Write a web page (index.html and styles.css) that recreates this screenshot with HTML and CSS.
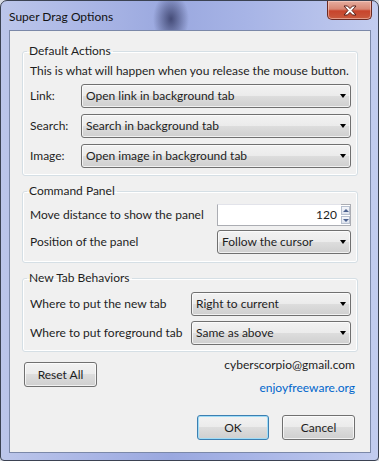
FILE: index.html
```html
<!DOCTYPE html>
<html lang="en">
<head>
    <meta charset="UTF-8">
    <title>Super Drag Options</title>
    <link rel="stylesheet" href="styles.css">
</head>
<body>

<div class="window">
    <div class="titlebar">
        <span class="title">Super Drag Options</span>
        <span class="close-btn">
            <svg width="16" height="11" viewBox="0 0 16 11">
                <path d="M2 1 L5.5 1 L8 3.6 L10.5 1 L14 1 L10 5.5 L14 10 L10.5 10 L8 7.4 L5.5 10 L2 10 L6 5.5 Z" fill="#fff" stroke="#5a1f18" stroke-width="1" stroke-linejoin="round"/>
            </svg>
        </span>
    </div>

    <div class="client">
        <!-- Acciones por defecto -->
        <fieldset class="group group-actions">
            <legend>Default Actions</legend>
            <p class="hint">This is what will happen when you release the mouse button.</p>
            <div class="rows rows-actions">
                <span class="lbl">Link:</span>
                <div class="combo">Open link in background tab<span class="arrow"></span></div>
                <span class="lbl">Search:</span>
                <div class="combo">Search in background tab<span class="arrow"></span></div>
                <span class="lbl">Image:</span>
                <div class="combo">Open image in background tab<span class="arrow"></span></div>
            </div>
        </fieldset>

        <fieldset class="group">
            <legend>Command Panel</legend>
            <div class="rows rows-panel">
                <span class="lbl">Move distance to show the panel</span>
                <div class="spin">
                    <div class="spin-field">120</div>
                    <div class="spin-btns">
                        <span class="spin-up"></span>
                        <span class="spin-down"></span>
                    </div>
                </div>
                <span class="lbl">Position of the panel</span>
                <div class="combo">Follow the cursor<span class="arrow"></span></div>
            </div>
        </fieldset>

        <fieldset class="group">
            <legend>New Tab Behaviors</legend>
            <div class="rows rows-tabs">
                <span class="lbl">Where to put the new tab</span>
                <div class="combo">Right to current<span class="arrow"></span></div>
                <span class="lbl">Where to put foreground tab</span>
                <div class="combo">Same as above<span class="arrow"></span></div>
            </div>
        </fieldset>

        <div class="footer">
            <div class="footer-top">
                <button class="btn btn-reset">Reset All</button>
                <div class="contact">
                    <div class="mail">cyberscorpio@gmail.com</div>
                    <a class="site" href="#">enjoyfreeware.org</a>
                </div>
            </div>
            <div class="actions">
                <button class="btn btn-default">OK</button>
                <button class="btn">Cancel</button>
            </div>
        </div>
    </div>
</div>

</body>
</html>
```

FILE: styles.css
```css
html, body {
    margin: 0;
    padding: 0;
    background: #d8dce4;
}

body {
    font-family: Lato, "Noto Sans", sans-serif;
    font-size: 12px;
    color: #1e1e1e;
}

/* Marco de la ventana (estilo Aero) */
.window {
    width: 379px;
    height: 461px;
    box-sizing: border-box;
    padding: 0 7px 8px 8px;
    border: 1px solid #3b4252;
    border-radius: 7px 7px 4px 4px;
    background:
        radial-gradient(ellipse 18px 26px at 170px 18px, rgba(40, 45, 85, 0.75), rgba(40, 45, 85, 0) 100%),
        linear-gradient(90deg, #bcc6ea 0%, #a9b5e5 25%, #9aa8df 45%, #a7b4e6 65%, #c2ccef 100%);
}

.titlebar {
    height: 29px;
    display: flex;
    justify-content: space-between;
    align-items: flex-start;
}
.title {
    margin: 8px 0 0 0;
    line-height: 16px;
    color: #111;
}
.close-btn {
    width: 45px;
    height: 19px;
    margin-right: -1px;
    display: flex;
    align-items: center;
    justify-content: center;
    box-sizing: border-box;
    border: 1px solid #6b2a22;
    border-top: none;
    border-radius: 0 0 5px 5px;
    background: linear-gradient(#e6ad9f 0%, #d88774 45%, #c8442c 55%, #c95a3e 100%);
    box-shadow: inset 0 0 0 1px rgba(255, 220, 210, 0.5);
}

.client {
    height: 423px;
    box-sizing: border-box;
    background: #f0f0f0;
    border: 1px solid #7b88a8;
    padding: 12px 12px 12px 12px;
    display: flex;
    flex-direction: column;
}

/* Grupos */
.group {
    margin: 0 0 7px 0;
    padding: 0 6px 6px 7px;
    border: 1px solid #d5dfe5;
    border-radius: 3px;
    box-shadow: inset 0 0 0 1px #fff;
    min-width: 0;
}
.group-actions { padding-bottom: 7px; }
.group legend {
    padding: 0 2px;
    margin-left: -3px;
    line-height: 16px;
}

.hint {
    margin: 4px 0 5px 0;
    line-height: 16px;
    white-space: nowrap;
}

.rows {
    display: grid;
    align-items: center;
    row-gap: 6px;
}
.rows-actions { grid-template-columns: 51px 1fr; }
.rows-panel {
    grid-template-columns: 187px 1fr;
    row-gap: 4px;
    margin: 5px 0 2px 0;
}
.rows-tabs {
    grid-template-columns: 161px 1fr;
    row-gap: 5px;
    margin: 6px 0 0 0;
}

.lbl { line-height: 16px; white-space: nowrap; }

/* Combo desplegable estilo Windows 7 */
.combo {
    position: relative;
    height: 24px;
    box-sizing: border-box;
    line-height: 22px;
    padding-left: 4px;
    border: 1px solid #707070;
    border-radius: 3px;
    background: linear-gradient(#f2f2f2 0%, #ebebeb 50%, #dddddd 50%, #cfcfcf 100%);
    box-shadow: inset 0 0 0 1px rgba(255, 255, 255, 0.7);
    white-space: nowrap;
}
.arrow {
    position: absolute;
    right: 4px;
    top: 9px;
    width: 0;
    height: 0;
    border-left: 3.5px solid transparent;
    border-right: 3.5px solid transparent;
    border-top: 4px solid #000;
}

/* Campo numérico con flechas */
.spin {
    display: flex;
    height: 22px;
}
.spin-field {
    flex: 1;
    box-sizing: border-box;
    background: #fff;
    border: 1px solid #abadb3;
    border-top-color: #e2e3ea;
    border-right: none;
    text-align: right;
    padding-right: 4px;
    line-height: 20px;
}
.spin-btns {
    width: 9px;
    display: flex;
    flex-direction: column;
    gap: 1px;
    padding: 1px 0;
    background: #fff;
    border: 1px solid #abadb3;
    border-left: none;
}
.spin-btns span {
    flex: 1;
    position: relative;
    background: linear-gradient(#f4f6fa, #dde3ee);
    border: 1px solid #b7c0cf;
}
.spin-up::after, .spin-down::after {
    content: "";
    position: absolute;
    left: 1px;
    top: 2px;
    border-left: 3px solid transparent;
    border-right: 3px solid transparent;
}
.spin-up::after { border-bottom: 3px solid #4c6290; }
.spin-down::after { border-top: 3px solid #4c6290; }

/* Pie */
.footer {
    display: flex;
    flex-direction: column;
    flex: 1;
    padding: 0 3px 0 2px;
}
.footer-top {
    display: flex;
    justify-content: space-between;
    align-items: flex-start;
}
.contact {
    text-align: right;
    line-height: 16px;
    margin-top: -2px;
}
.mail { margin-bottom: 7px; }
.site {
    color: #0066cc;
    text-decoration: none;
}

.actions {
    margin-top: auto;
    display: flex;
    justify-content: flex-end;
    gap: 13px;
}

.btn {
    font: inherit;
    color: #1e1e1e;
    width: 73px;
    height: 25px;
    padding: 0;
    border: 1px solid #707070;
    border-radius: 3px;
    background: linear-gradient(#f2f2f2 0%, #ebebeb 50%, #dddddd 50%, #cfcfcf 100%);
    box-shadow: inset 0 0 0 1px rgba(255, 255, 255, 0.7);
}
.btn-reset { margin-top: 3px; }
.btn-default {
    width: 72px;
    border-color: #3c7fb1;
    box-shadow: inset 0 0 0 1px #9fdcf7;
}
```
